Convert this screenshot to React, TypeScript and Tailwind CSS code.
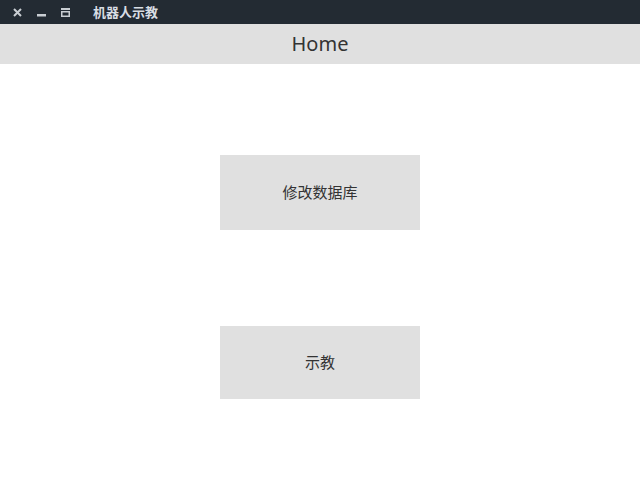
import React from 'react';

const TitleBar: React.FC = () => (
  <div className="h-6 bg-[#232b33] flex items-center text-[#d8dde3]">
    <div className="flex items-center gap-[15px] pl-[13px]">
      <svg width="9" height="9" viewBox="0 0 9 9">
        <path d="M1 1L8 8M8 1L1 8" stroke="#c9ced3" strokeWidth="2" />
      </svg>
      <svg width="9" height="9" viewBox="0 0 9 9">
        <rect x="0" y="6" width="9" height="2.5" fill="#c9ced3" />
      </svg>
      <svg width="9" height="9" viewBox="0 0 9 9">
        <rect x="0" y="0" width="9" height="2" fill="#c9ced3" />
        <rect x="0.75" y="3.75" width="7.5" height="4.5" fill="none" stroke="#c9ced3" strokeWidth="1.5" />
      </svg>
    </div>
    <span
      className="ml-[23px] text-[13px] font-bold"
      style={{ fontFamily: '"Noto Sans CJK SC", "Noto Sans", sans-serif' }}
    >
      机器人示教
    </span>
  </div>
);

const MenuButton: React.FC<{ label: string; h: string }> = ({ label, h }) => (
  <button
    className={`w-[200px] ${h} bg-[#e0e0e0] text-[15px] text-[#333333] flex items-center justify-center`}
    style={{ fontFamily: '"Noto Sans", "Noto Sans CJK SC", sans-serif' }}
  >
    {label}
  </button>
);

export default function App() {
  return (
    <div className="w-[640px] h-[504px] bg-white flex flex-col">
      <TitleBar />
      <div
        className="h-10 bg-[#e0e0e0] flex items-center justify-center text-[20px] text-[#333333]"
        style={{ fontFamily: '"Noto Sans", sans-serif' }}
      >
        Home
      </div>
      <div className="flex flex-col items-center pt-[91px] gap-[96px]">
        <MenuButton label="修改数据库" h="h-[75px]" />
        <MenuButton label="示教" h="h-[73px]" />
      </div>
    </div>
  );
}
